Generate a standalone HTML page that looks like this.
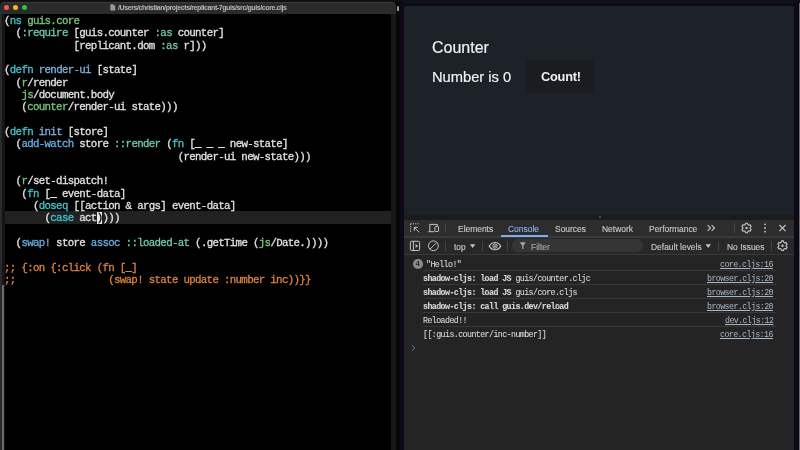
<!DOCTYPE html>
<html><head><meta charset="utf-8">
<style>
*{margin:0;padding:0;box-sizing:border-box}
html,body{width:800px;height:450px;overflow:hidden;background:#080808;position:relative}
.abs{position:absolute}
body *{will-change:transform}
#ed{left:0;top:2px;width:396px;height:448px;background:#000;border-radius:4px 4px 0 0;overflow:hidden}
#tb{left:0;top:0;width:396px;height:12px;background:#2b2b2b;border-top:1px solid #3c3c3c}
.tl{position:absolute;top:2.2px;width:5.3px;height:5.3px;border-radius:50%}
#title{position:absolute;left:117.5px;top:0.8px;font:bold 7px "Liberation Sans",sans-serif;letter-spacing:-0.4px;color:#b8b8b8;white-space:nowrap}
#code{left:3.9px;top:13.3px;font:10.8px/12.33px "Liberation Mono",monospace;letter-spacing:-0.69px;color:#e0e0e0;-webkit-text-stroke:0.3px currentColor}
#code div{height:12.33px;white-space:pre}
.kw{color:#3cc6cc}
.ns{color:#76c67e}
.key{color:#6fc8a8}
.fnm{color:#7fb0da}
.blt{color:#68acdd}
.cm{color:#da8140}
.cur{background:#e8e8e8;color:#000}
#hl{left:0;width:391px;background:#212121}
#br{left:400px;top:1.8px;width:398.8px;height:448.2px;background:#0e0918;border-top:1.2px solid #141726;border-radius:5px 5px 0 0}
#page{left:404px;top:5.8px;width:389.8px;height:209.2px;background:#1c2228;border-radius:2px 2px 0 0}
.pg{position:absolute;color:#f0f0f0;-webkit-text-stroke:0.2px currentColor;font-family:"Liberation Sans",sans-serif;white-space:nowrap}
#btn{position:absolute;left:121.6px;top:54px;width:68.4px;height:33.4px;background:#1a1d20;border-radius:4px}
.tab{position:absolute;font-family:"Liberation Sans",sans-serif;font-size:8.45px;color:#c8c8c8;white-space:nowrap;-webkit-text-stroke:0.12px currentColor}
.sep{position:absolute;width:1px;background:#444}
.msg{position:absolute;left:422.75px;width:353px;height:14.02px;border-top:1px solid #383838}
.mono{font-family:"Liberation Mono",monospace;font-size:8.3px;letter-spacing:-0.58px;color:#d6d6d6;-webkit-text-stroke:0.1px currentColor;white-space:pre;position:absolute;top:2.7px}
.lnk{position:absolute;right:3px;top:2.7px;font-family:"Liberation Mono",monospace;font-size:8.3px;letter-spacing:-0.58px;color:#a9b8c8;text-decoration:underline;white-space:pre}
b{font-weight:bold}
</style></head><body>
<div class="abs" style="left:0;top:0;width:800px;height:2px;background:#0f0f0f"></div>
<div id="ed" class="abs">
  <div id="tb" class="abs">
    <div class="tl" style="left:4.05px;background:#f25a52"></div>
    <div class="tl" style="left:12.75px;background:#f5b52c"></div>
    <div class="tl" style="left:21.65px;background:#2bc43e"></div>
    <svg class="abs" style="left:109.9px;top:1.2px" width="6" height="7" viewBox="0 0 6 7"><path d="M0.3 0.3H3.6L5.3 2V6.6H0.3Z" fill="#9a9a9a"/><path d="M3.6 0.3V2H5.3" fill="#6a6a6a"/></svg><div id="title">/Users/christian/projects/replicant-7guis/src/guis/core.cljs</div>
  </div>
  <div id="hl" class="abs" style="top:209.38px;height:12.5px"></div>
  <div class="abs" style="left:0;top:11.5px;width:1.6px;height:440px;background:#2a2a2a"></div><div class="abs" style="left:1.6px;top:11.5px;width:3px;height:440px;background:#151515"></div><div class="abs" style="left:1.8px;top:283px;width:2.4px;height:170px;background:#6a6a6a"></div>
  <div class="abs" style="left:391px;top:11.5px;width:5px;height:440px;background:#171717"></div>
  <div id="code" class="abs"><div>(<span class="kw">ns</span> <span class="ns">guis.core</span></div><div>  (<span class="key">:require</span> [guis.counter <span class="key">:as</span> counter]</div><div>            [replicant.dom <span class="key">:as</span> r]))</div><div> </div><div>(<span class="kw">defn</span> <span class="fnm">render-ui</span> [state]</div><div>  (<span class="ns">r</span>/render</div><div>   <span class="ns">js</span>/document.body</div><div>   (<span class="ns">counter</span>/render-ui state)))</div><div> </div><div>(<span class="kw">defn</span> <span class="fnm">init</span> [store]</div><div>  (<span class="blt">add-watch</span> store <span class="key">::render</span> (<span class="kw">fn</span> [_ _ _ new-state]</div><div>                              (render-ui new-state)))</div><div> </div><div>  (<span class="ns">r</span>/set-dispatch!</div><div>   (<span class="kw">fn</span> [_ event-data]</div><div>     (<span class="kw">doseq</span> [[action &amp; args] event-data]</div><div>       (<span class="kw">case</span> act<span class="cur">)</span>)))</div><div> </div><div>  (<span class="blt">swap!</span> store <span class="blt">assoc</span> <span class="key">::loaded-at</span> (.getTime (<span class="ns">js</span>/Date.))))</div><div> </div><div><span class="cm">;; {:on {:click (fn [_]</span></div><div><span class="cm">;;                (swap! state update :number inc))}}</span></div></div>
</div>
<div id="br" class="abs"></div>
<div class="abs" style="left:396.6px;top:5.5px;width:1.6px;height:4.5px;background:#9a9a9a;border-radius:0.5px;border-top:1px solid #a06030"></div>
<div id="page" class="abs">
  <div class="pg" style="left:28.3px;top:33.2px;font-size:16px">Counter</div>
  <div class="pg" style="left:28px;top:62.8px;font-size:14.7px">Number is 0</div>
  <div id="btn"><div class="pg" style="left:14.6px;top:9.4px;font-size:12.8px;font-weight:bold;letter-spacing:-0.25px;-webkit-text-stroke:0">Count!</div></div>
</div>
<div class="abs" style="left:404px;top:215px;width:389.8px;height:235px;background:#242424"></div>
<div class="abs" style="left:404px;top:215px;width:389.8px;height:5px;background:#1b1b1b"></div>
<div class="abs" style="left:598.5px;top:216.2px;width:2px;height:2px;border-radius:50%;background:#555"></div>
<div class="abs" style="left:404px;top:219.8px;width:389.8px;height:17px;background:#2d2d2d"></div>
<div class="abs" style="left:404px;top:236.1px;width:389.8px;height:1.5px;background:#3a3a3a"></div>
<div class="abs" style="left:404px;top:237.6px;width:389.8px;height:16.4px;background:#282828"></div>
<div class="abs" style="left:404px;top:253.9px;width:389.8px;height:1.3px;background:#3a3a3a"></div>
<div class="tab" style="left:458px;top:224px">Elements</div>
<div class="tab" style="left:508px;top:224px;color:#8ab4f0">Console</div>
<div class="abs" style="left:500.7px;top:235.2px;width:46.5px;height:1.6px;background:#7eaee8"></div>
<div class="tab" style="left:554.5px;top:224px">Sources</div>
<div class="tab" style="left:601.5px;top:224px">Network</div>
<div class="tab" style="left:648.5px;top:224px">Performance</div>
<div class="sep" style="left:445.0px;top:223px;height:10.0px"></div><div class="sep" style="left:733.9px;top:223px;height:9.5px"></div><div class="sep" style="left:445.0px;top:240.6px;height:10.3px"></div><div class="sep" style="left:482.1px;top:240.6px;height:10.3px"></div><div class="sep" style="left:506.8px;top:240.6px;height:10.3px"></div><div class="sep" style="left:717.9px;top:240.6px;height:10.3px"></div><div class="sep" style="left:770.5px;top:240.6px;height:10.3px"></div>
<div class="abs" style="left:512.4px;top:239.2px;width:131.2px;height:13.2px;border-radius:6.6px;background:#353535"></div>
<div class="tab" style="left:531px;top:241.5px;color:#a8a8a8">Filter</div>
<div class="tab" style="left:454px;top:241.5px">top</div>
<div class="tab" style="left:651px;top:241.5px">Default levels</div>
<div class="tab" style="left:726.5px;top:241.5px">No Issues</div>
<div class="msg" style="top:256.20px;border-top-color:transparent;"><div class="mono" style="left:2.55px">"Hello!"</div><div class="lnk">core.cljs:16</div></div>
<div class="msg" style="top:270.22px;"><div class="mono" style="left:0.00px"><b>shadow-cljs: load JS</b> guis/counter.cljc</div><div class="lnk">browser.cljs:20</div></div>
<div class="msg" style="top:284.24px;"><div class="mono" style="left:0.00px"><b>shadow-cljs: load JS</b> guis/core.cljs</div><div class="lnk">browser.cljs:20</div></div>
<div class="msg" style="top:298.26px;"><div class="mono" style="left:0.00px"><b>shadow-cljs: call guis.dev/reload</b></div><div class="lnk">browser.cljs:20</div></div>
<div class="msg" style="top:312.28px;"><div class="mono" style="left:0.00px">Reloaded!!</div><div class="lnk">dev.cljs:12</div></div>
<div class="msg" style="top:326.30px;"><div class="mono" style="left:0.00px">[[:guis.counter/inc-number]]</div><div class="lnk">core.cljs:16</div></div>

<div class="abs" style="left:413px;top:258.5px;width:9.6px;height:9.6px;border-radius:50%;background:#8a8a8a;color:#262626;font:bold 7px/9.6px 'Liberation Sans',sans-serif;text-align:center">4</div>
<svg class="abs" style="left:0;top:0" width="800" height="450" viewBox="0 0 800 450">
<g fill="none" stroke="#c6c6c6" stroke-width="1">
 <!-- inspect -->
 <path d="M410.6 223.8h9" stroke-dasharray="1.1 1.2"/>
 <path d="M410.6 223.8v9" stroke-dasharray="1.1 1.2"/>
 <path d="M419.3 232.4L414.3 227.4M414.3 230.9V227.4H417.8" stroke-width="0.95"/>
 <!-- device -->
 <path d="M428.3 231.7H434.2M429.8 231.5V224.4H437.3V225.9"/>
 <rect x="434.9" y="226.4" width="3.6" height="5.1" rx="0.7"/>
 <!-- sidebar -->
 <rect x="410.4" y="241.3" width="9.2" height="9.2" rx="1"/>
 <path d="M413.4 241.3V250.5"/>
 <!-- block -->
 <circle cx="433.4" cy="245.8" r="4.9"/>
 <path d="M436.9 242.3L429.9 249.3"/>
 <!-- eye -->
 <path d="M489.2 246.1C491 243.3 493 242.5 495 242.5C497 242.5 499 243.3 500.8 246.1C499 248.9 497 249.7 495 249.7C493 249.7 491 248.9 489.2 246.1Z" stroke-width="1.1"/>
 <circle cx="495" cy="246.1" r="2.1"/>
 <!-- >> -->
 <path d="M707.6 225.2L710.5 228L707.6 230.8M711.6 225.2L714.5 228L711.6 230.8" stroke-width="1.1"/>
 <!-- X -->
 <path d="M779.4 225L785.6 231.2M785.6 225L779.4 231.2" stroke-width="1.1"/>
 <!-- gears -->
 <path d="M745.48 223.21 L747.52 223.21 L747.72 224.51 L748.92 225.20 L750.14 224.72 L751.16 226.49 L750.13 227.31 L750.13 228.69 L751.16 229.51 L750.14 231.28 L748.92 230.80 L747.72 231.49 L747.52 232.79 L745.48 232.79 L745.28 231.49 L744.08 230.80 L742.86 231.28 L741.84 229.51 L742.87 228.69 L742.87 227.31 L741.84 226.49 L742.86 224.72 L744.08 225.20 L745.28 224.51Z" stroke-width="1.1" stroke-linejoin="round"/><circle cx="746.5" cy="228" r="1.2" fill="#c6c6c6" stroke="none"/>
 <path d="M781.48 240.91 L783.52 240.91 L783.72 242.21 L784.92 242.90 L786.14 242.42 L787.16 244.19 L786.13 245.01 L786.13 246.39 L787.16 247.21 L786.14 248.98 L784.92 248.50 L783.72 249.19 L783.52 250.49 L781.48 250.49 L781.28 249.19 L780.08 248.50 L778.86 248.98 L777.84 247.21 L778.87 246.39 L778.87 245.01 L777.84 244.19 L778.86 242.42 L780.08 242.90 L781.28 242.21Z" stroke-width="1.1" stroke-linejoin="round"/><circle cx="782.5" cy="245.7" r="1.2" fill="#c6c6c6" stroke="none"/>
</g>
<g fill="#c6c6c6">
 <path d="M415.6 243.9L418 245.9L415.6 247.9Z"/>
 <circle cx="495" cy="246.1" r="0.9"/>
 <path d="M470 244.2H475.3L472.65 247.9Z"/>
 <path d="M705.5 244.2H711L708.25 248Z"/>
 <circle cx="765" cy="224.3" r="0.9"/><circle cx="765" cy="228" r="0.9"/><circle cx="765" cy="231.7" r="0.9"/>
 <path d="M519.8 242.3H525.8L523.4 245.6V249H522.2V245.6Z" fill="#a8a8a8"/>
 <path d="M412.2 345.4L414.8 348L412.2 350.6" fill="none" stroke="#5a9ad8" stroke-width="0.9"/>
</g>
</svg>
<div class="abs" style="left:798.8px;top:2.5px;width:1.2px;height:448px;background:#6a6a6a"></div>
</body></html>
